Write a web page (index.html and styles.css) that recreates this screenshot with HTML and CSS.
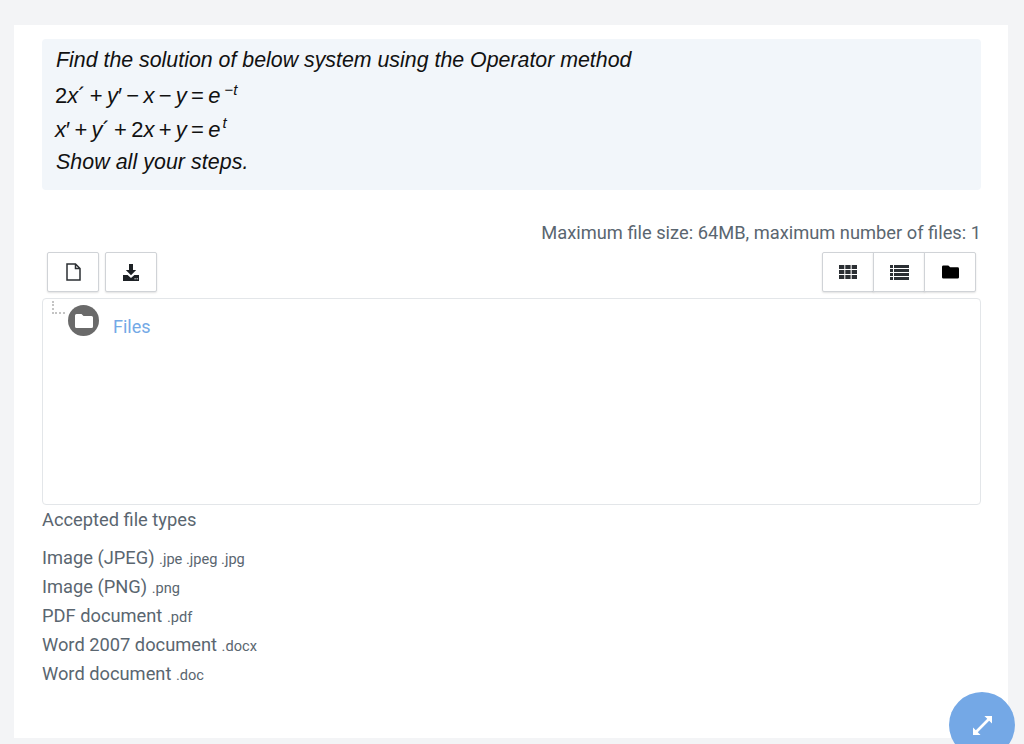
FILE: index.html
```html
<!DOCTYPE html>
<html lang="en">
<head>
  <meta charset="UTF-8" />
  <meta name="viewport" content="width=device-width, initial-scale=1.0"/>
  <title>Essay answer</title>
  <link rel="stylesheet" href="styles.css">
</head>
<body>
  <main class="card">
    <section class="question">
      <p class="line prose">Find the solution of below system using the Operator method</p>
      <p class="line eq">2<i>x</i>&#180;<span class="op">+</span><i>y</i>&#8242;<span class="op">&#8722;</span><i>x</i><span class="op">&#8722;</span><i>y</i><span class="op">=</span><i>e</i><sup class="big-sup">&#8722;<i>t</i></sup></p>
      <p class="line eq"><i>x</i>&#8242;<span class="op">+</span><i>y</i>&#180;<span class="op">+</span>2<i>x</i><span class="op">+</span><i>y</i><span class="op">=</span><i>e</i><sup><i>t</i></sup></p>
      <p class="line prose steps">Show all your steps.</p>
    </section>

    <p class="limits">Maximum file size: 64MB, maximum number of files: 1</p>

    <div class="toolbar">
      <div class="tool-group">
        <button class="tool-btn" aria-label="New file">
          <svg width="15" height="18" viewBox="0 0 15 18"><path d="M1 1h8.500L14 5.500V17H1z M9.500 1v4.500H14" fill="none" stroke="#2b2f33" stroke-width="1.500"/></svg>
        </button>
        <button class="tool-btn" aria-label="Download">
          <svg width="18" height="17" viewBox="0 0 18 17"><path d="M7 0h4v6h3.200L9 11.200 3.800 6H7z" fill="#1d2125"/><path d="M1 11h4.600L9 14l3.400-3H17v6H1z" fill="#1d2125"/><rect x="12.500" y="14.300" width="1.200" height="1" fill="#fff"/><rect x="14.600" y="14.300" width="1.200" height="1" fill="#fff"/></svg>
        </button>
      </div>
      <div class="view-group">
        <button class="view-btn" aria-label="Icons">
          <svg width="18" height="14" viewBox="0 0 18 14" fill="#2b2f33"><rect x="0" y="0" width="5.300" height="4"/><rect x="6.300" y="0" width="5.300" height="4"/><rect x="12.700" y="0" width="5.300" height="4"/><rect x="0" y="5" width="5.300" height="4"/><rect x="6.300" y="5" width="5.300" height="4"/><rect x="12.700" y="5" width="5.300" height="4"/><rect x="0" y="10" width="5.300" height="4"/><rect x="6.300" y="10" width="5.300" height="4"/><rect x="12.700" y="10" width="5.300" height="4"/></svg>
        </button>
        <button class="view-btn" aria-label="Details">
          <svg width="19" height="15" viewBox="0 0 19 15" fill="#2b2f33"><rect x="0" y="0" width="3" height="3"/><rect x="4" y="0" width="15" height="3"/><rect x="0" y="4" width="3" height="3"/><rect x="4" y="4" width="15" height="3"/><rect x="0" y="8" width="3" height="3"/><rect x="4" y="8" width="15" height="3"/><rect x="0" y="12" width="3" height="3"/><rect x="4" y="12" width="15" height="3"/></svg>
        </button>
        <button class="view-btn" aria-label="Tree">
          <svg width="17" height="14" viewBox="0 0 18 14"><path d="M1.500 0h5.200l2 2h7.800A1.500 1.500 0 0 1 18 3.500v9a1.500 1.500 0 0 1-1.500 1.500h-15A1.500 1.500 0 0 1 0 12.500v-11A1.500 1.500 0 0 1 1.500 0z" fill="#000"/></svg>
        </button>
      </div>
    </div>

    <div class="file-area">
      <span class="tree-line"></span>
      <span class="folder-badge">
        <svg width="18" height="14" viewBox="0 0 18 14"><path d="M1.500 0h5l2 2h8A1.500 1.500 0 0 1 18 3.500v9a1.500 1.500 0 0 1-1.500 1.500h-15A1.500 1.500 0 0 1 0 12.500v-11A1.500 1.500 0 0 1 1.500 0z" fill="#fff"/></svg>
      </span>
      <a class="folder-name" href="#">Files</a>
    </div>

    <div class="accepted">
      <p class="accepted-title">Accepted file types</p>
      <ul class="type-list">
        <li>Image (JPEG) <small>.jpe .jpeg .jpg</small></li>
        <li>Image (PNG) <small>.png</small></li>
        <li>PDF document <small>.pdf</small></li>
        <li>Word 2007 document <small>.docx</small></li>
        <li>Word document <small>.doc</small></li>
      </ul>
    </div>
  </main>

  <button class="fab" aria-label="Expand">
    <svg width="19" height="19" viewBox="0 0 20 20" fill="#fff"><path d="M12 0h8v8l-3-3L5 17l3 3H0v-8l3 3L15 3z"/></svg>
  </button>
</body>
</html>
```

FILE: styles.css
```css
* {
  margin: 0;
  padding: 0;
  box-sizing: border-box;
}

html, body {
  height: 744px;
  overflow: hidden;
}

body {
  font-family: Roboto, 'Liberation Sans', sans-serif;
  background: #f3f4f6;
  color: #5a6670;
  padding: 25px 16px 6px 14px;
}

.card {
  background: #fff;
  height: 713px;
  padding: 14px 27px 0 28px;
}

.question {
  background: #f2f6fa;
  border-radius: 4px;
  height: 151px;
  padding: 4px 14px;
  font-family: 'Liberation Sans', Arial, sans-serif;
  color: #111;
}

.line {
  height: 34px;
  line-height: 34px;
  font-size: 21.350px;
  white-space: nowrap;
}

.prose {
  font-style: italic;
}

.steps {
  letter-spacing: 0.070px;
}

.eq {
  font-size: 22px;
  line-height: 37px;
  margin-left: -1px;
}

.op {
  margin: 0 4.250px;
}

.eq sup {
  font-size: 15px;
  line-height: 0;
  vertical-align: 9px;
  margin-left: 2px;
}

.eq .big-sup {
  vertical-align: 8px;
  margin-left: 4px;
}

.limits {
  margin-top: 31px;
  text-align: right;
  font-size: 18.300px;
  line-height: 24px;
}

.toolbar {
  display: flex;
  justify-content: space-between;
  margin-top: 7px;
  padding: 0 5px;
}

.tool-group {
  display: flex;
  gap: 6px;
}

.tool-btn,
.view-btn {
  display: flex;
  align-items: center;
  justify-content: center;
  height: 40px;
  background: #fff;
  border: 1px solid #d0d3d7;
  border-radius: 2px;
  box-shadow: 0 1px 2px rgba(0, 0, 0, 0.12);
}

.tool-btn {
  width: 52px;
}

.view-group {
  display: flex;
}

.view-btn {
  width: 52px;
  border-radius: 0;
  margin-left: -1px;
}

.view-btn:first-child {
  border-radius: 2px 0 0 2px;
}

.view-btn:last-child {
  border-radius: 0 2px 2px 0;
}

.file-area {
  position: relative;
  height: 207px;
  margin-top: 6px;
  border: 1px solid #e3e6e9;
  border-radius: 4px;
  display: flex;
  align-items: flex-start;
  padding: 6px 0 0 25px;
}

.tree-line {
  position: absolute;
  left: 9px;
  top: 2px;
  width: 13px;
  height: 13px;
  border-left: 2px dotted #c4c4c4;
  border-bottom: 2px dotted #c4c4c4;
}

.folder-badge {
  display: flex;
  align-items: center;
  justify-content: center;
  width: 31px;
  height: 31px;
  border-radius: 50%;
  background: #6a6a6a;
}

.folder-name {
  margin: 10px 0 0 14px;
  font-size: 18px;
  line-height: 24px;
  color: #74a9e6;
  text-decoration: none;
}

.accepted {
  font-size: 18.300px;
}

.accepted-title {
  margin-top: 3px;
  line-height: 24px;
}

.type-list {
  list-style: none;
  margin-top: 11px;
}

.type-list li {
  height: 29px;
  line-height: 29px;
}

.type-list small {
  font-size: 14.600px;
}

.fab {
  position: fixed;
  left: 949px;
  top: 692px;
  width: 66px;
  height: 66px;
  border: none;
  border-radius: 50%;
  background: #74a8e6;
  display: flex;
  align-items: flex-start;
  justify-content: center;
  padding-top: 24px;
}
```
